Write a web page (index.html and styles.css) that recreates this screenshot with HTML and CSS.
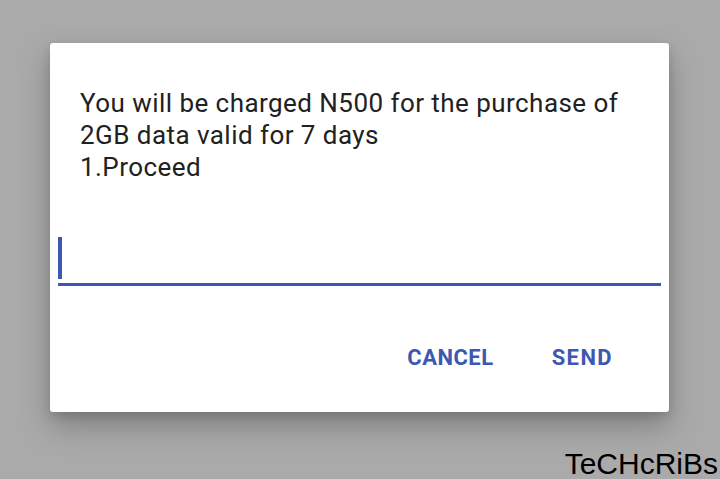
FILE: index.html
```html
<!DOCTYPE html>
<html>
<head>
<meta charset="utf-8">
<link rel="stylesheet" href="styles.css">
</head>
<body>
<div class="screen">
  <div class="dialog">
    <p class="message">You will be charged N500 for the purchase of<br>2GB data valid for 7 days<br>1.Proceed</p>
    <div class="field"><span class="cursor"></span></div>
    <div class="actions">
      <span class="btn">CANCEL</span>
      <span class="btn">SEND</span>
    </div>
  </div>
  <div class="watermark">TeCHcRiBs</div>
</div>
</body>
</html>
```
FILE: styles.css
```css
html, body {
  margin: 0;
  padding: 0;
}
body {
  width: 720px;
  height: 479px;
  overflow: hidden;
  background: #aaaaaa;
  font-family: Roboto, "Noto Sans", sans-serif;
}
.screen {
  position: relative;
  height: 479px;
  display: flex;
  flex-direction: column;
  padding: 43px 0 0 50px;
  box-sizing: border-box;
}
.dialog {
  width: 619px;
  height: 369px;
  background: #ffffff;
  border-radius: 3px;
  box-shadow: 0 14px 30px rgba(0, 0, 0, 0.25), 0 4px 10px rgba(0, 0, 0, 0.12);
  display: flex;
  flex-direction: column;
}
.message {
  margin: 0;
  padding: 44px 20px 0 30px;
  font-size: 26px;
  line-height: 32px;
  letter-spacing: 0.45px;
  color: #212121;
  white-space: nowrap;
}
.field {
  margin: 54px 8px 0 8px;
  height: 46px;
  border-bottom: 3px solid #3d58b3;
  display: flex;
  align-items: flex-start;
}
.cursor {
  width: 4px;
  height: 42px;
  background: #3d58b3;
}
.actions {
  display: flex;
  justify-content: flex-end;
  gap: 58px;
  padding: 60px 56px 0 0;
}
.btn {
  font-size: 22px;
  line-height: 24px;
  font-weight: 700;
  letter-spacing: 0.5px;
  color: #3d58b3;
}
.btn:last-child {
  letter-spacing: 1.4px;
}
.watermark {
  position: absolute;
  right: 2px;
  bottom: 1px;
  font-family: "Liberation Sans", Arial, sans-serif;
  font-size: 30px;
  line-height: 28px;
  color: #000000;
}
```
